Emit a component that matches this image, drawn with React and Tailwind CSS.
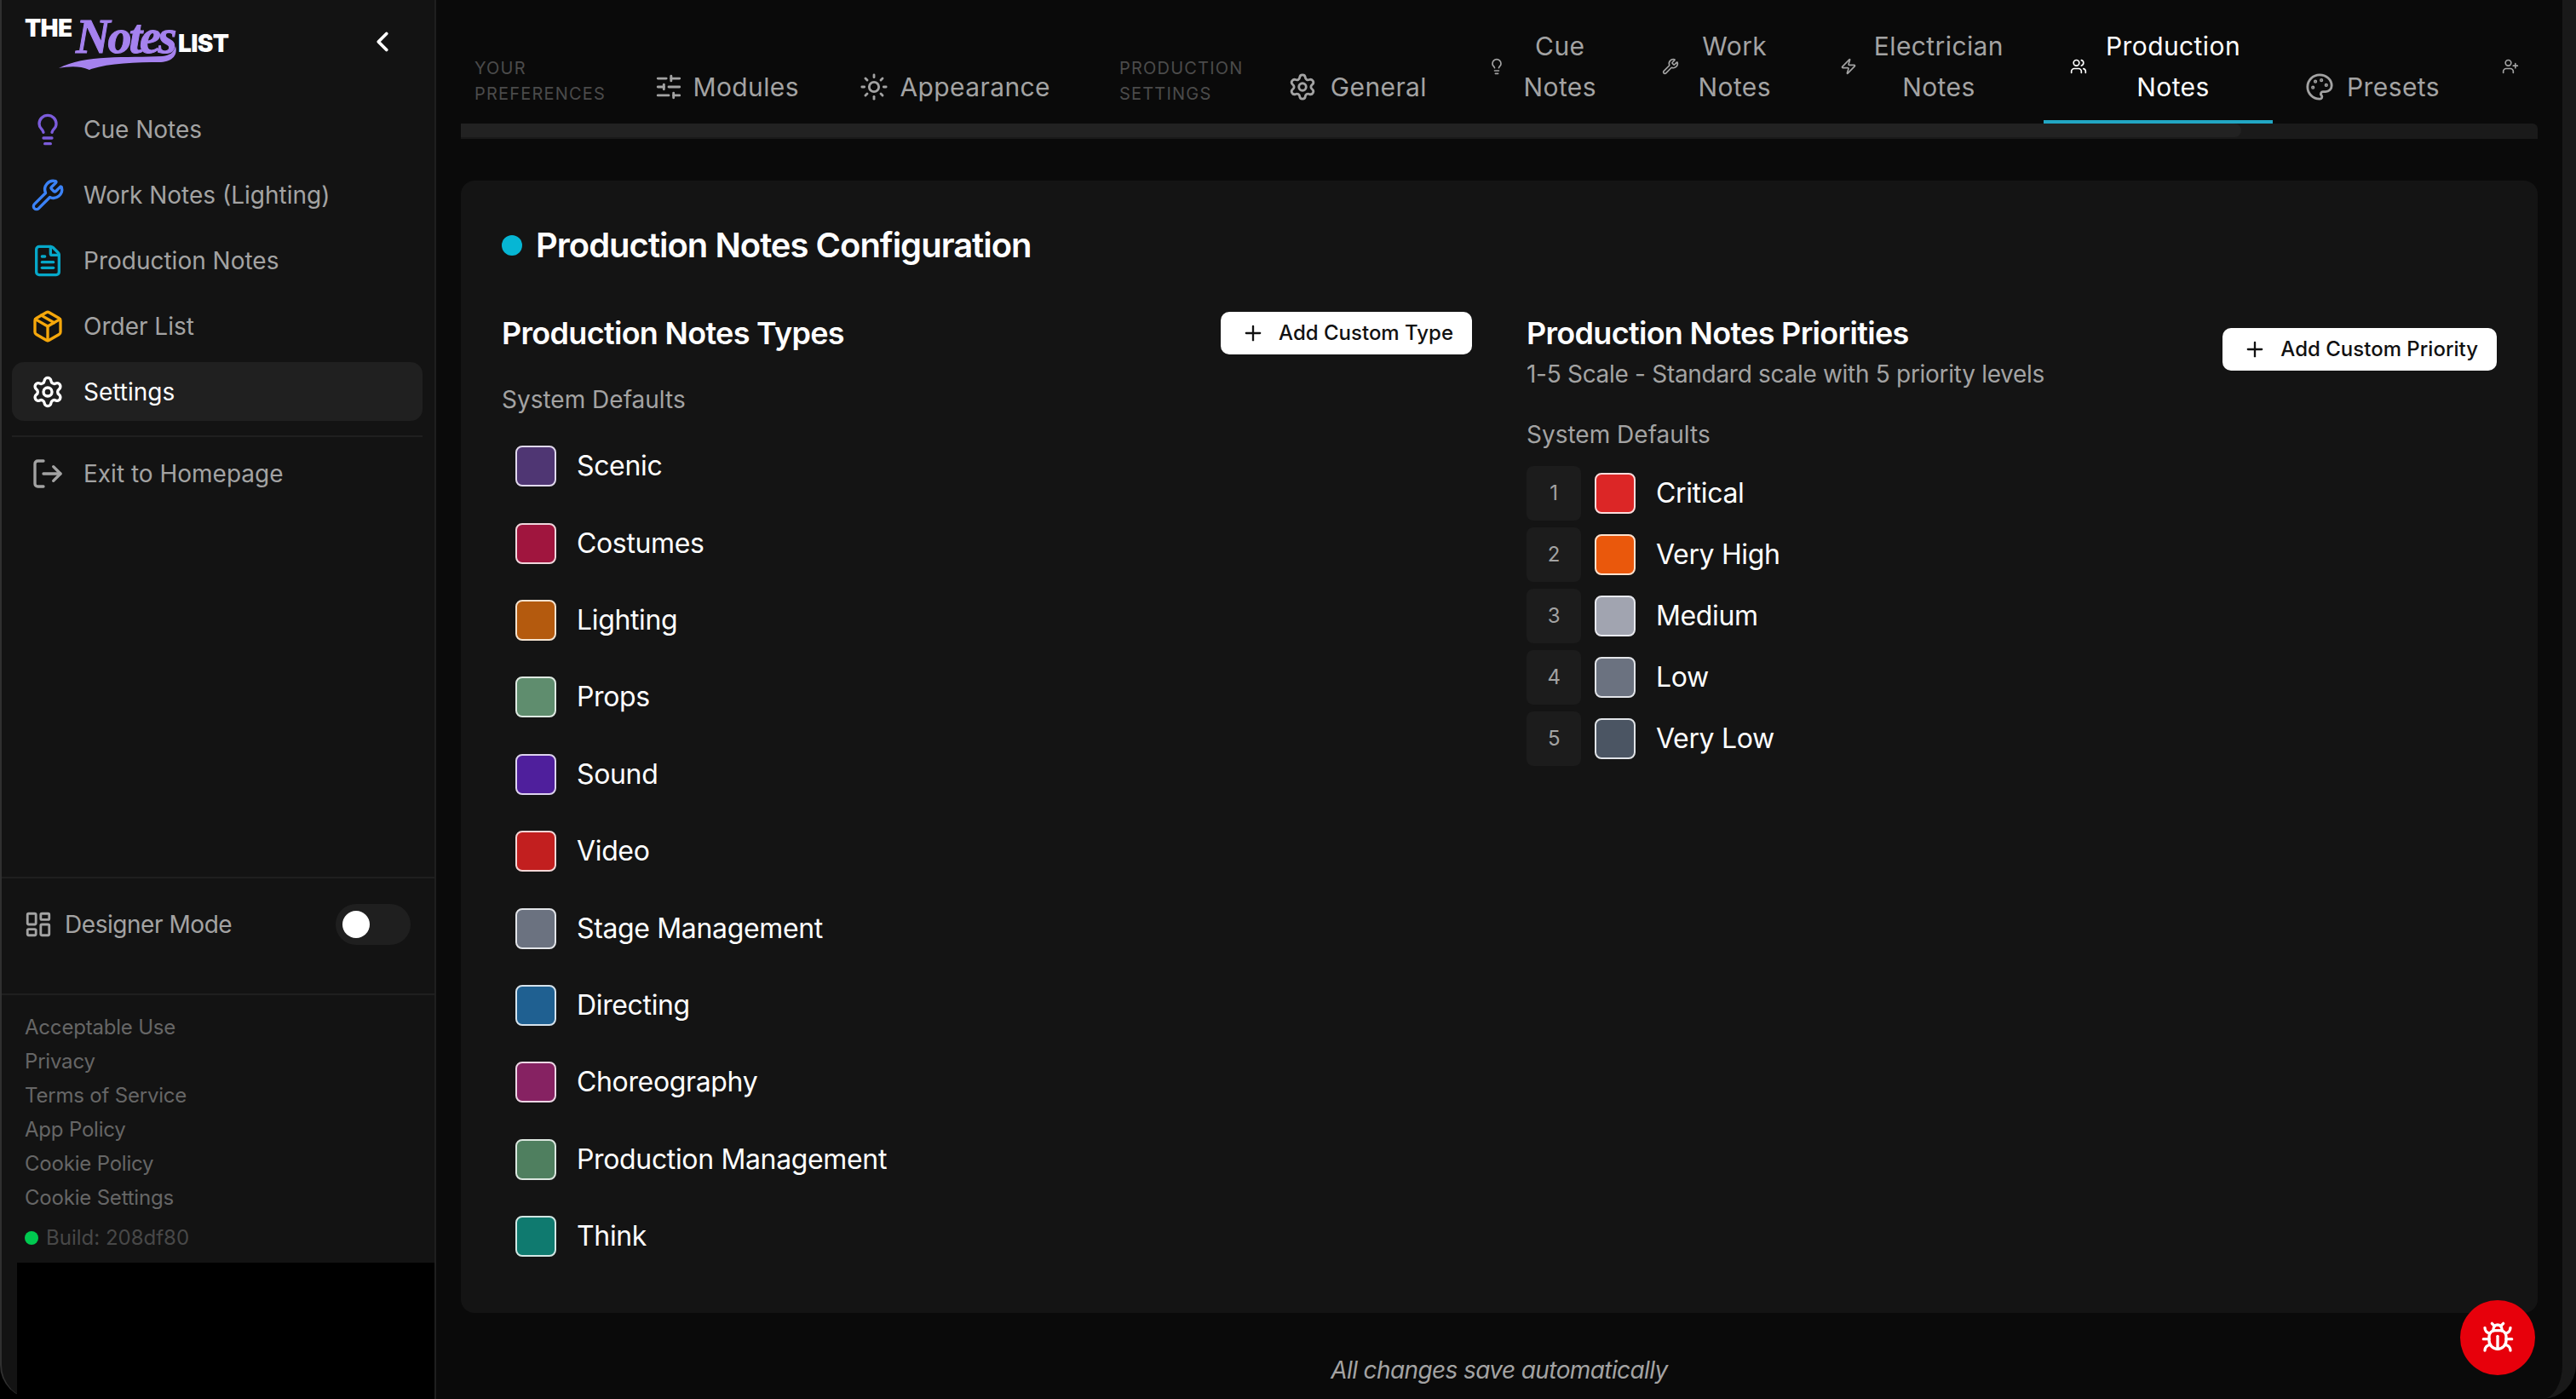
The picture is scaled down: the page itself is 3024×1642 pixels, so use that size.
import { Bug, ChevronLeft, FileText, LayoutDashboard, Lightbulb, LogOut, Package, Palette, Plus, Settings, SlidersHorizontal, Sun, UserPlus, Users, Wrench, Zap } from 'lucide-react';

const navItems = [
    { label: 'Cue Notes', icon: Lightbulb, color: 'text-[#7c5cdb]' },
    { label: 'Work Notes (Lighting)', icon: Wrench, color: 'text-[#3b82f6]' },
    { label: 'Production Notes', icon: FileText, color: 'text-[#06a8c9]' },
    { label: 'Order List', icon: Package, color: 'text-[#f5a70b]' },
];

const legalLinks = ['Acceptable Use', 'Privacy', 'Terms of Service', 'App Policy', 'Cookie Policy', 'Cookie Settings'];

const noteTypes = [
    { label: 'Scenic', color: 'bg-[#4f3673]', border: 'border-[#e0d8ec]' },
    { label: 'Costumes', color: 'bg-[#a0153e]', border: 'border-[#f0d6dc]' },
    { label: 'Lighting', color: 'bg-[#b45a0e]', border: 'border-[#f3e2cf]' },
    { label: 'Props', color: 'bg-[#5f8d6e]', border: 'border-[#dfe9e2]' },
    { label: 'Sound', color: 'bg-[#4f1f9c]', border: 'border-[#ddd3ee]' },
    { label: 'Video', color: 'bg-[#c21f1f]', border: 'border-[#f3d6d6]' },
    { label: 'Stage Management', color: 'bg-[#6b7280]', border: 'border-[#e2e4e8]' },
    { label: 'Directing', color: 'bg-[#1f6091]', border: 'border-[#d5e2ec]' },
    { label: 'Choreography', color: 'bg-[#862262]', border: 'border-[#ecd6e4]' },
    { label: 'Production Management', color: 'bg-[#4f7f5f]', border: 'border-[#dbe6df]' },
    { label: 'Think', color: 'bg-[#0f7a6f]', border: 'border-[#d2e6e3]' },
];

const priorities = [
    { label: 'Critical', color: 'bg-[#dc2626]', border: 'border-[#fbdcdc]' },
    { label: 'Very High', color: 'bg-[#ea580c]', border: 'border-[#fde2cf]' },
    { label: 'Medium', color: 'bg-[#a1a4b0]', border: 'border-[#e8e9ee]' },
    { label: 'Low', color: 'bg-[#6b7280]', border: 'border-[#e2e4e8]' },
    { label: 'Very Low', color: 'bg-[#4b5563]', border: 'border-[#e0e3e7]' },
];

function Logo() {
    return (
        <div className="relative h-[64px] w-[244px] leading-none">
            <span className="absolute left-0 top-[1px] text-[28px] font-black tracking-[-0.6px] text-white">THE</span>
            <span className="absolute left-[60px] top-[-3px] font-['Liberation_Serif',serif] text-[56px] font-bold italic tracking-[-3px] text-[#a582ee] [-webkit-text-stroke:1px_#a582ee]">Notes</span>
            <span className="absolute left-[180px] top-[19px] text-[28px] font-black tracking-[-0.6px] text-white">LIST</span>
            <svg className="absolute left-[40px] top-[32px]" width="140" height="32" viewBox="0 0 140 32">
                <path d="M0 30 C 30 14 80 18 122 16 C 130 15 135 12 137 4 C 140 14 134 22 120 23 C 90 23 60 24 38 31 L 36 32 C 24 27 12 28 0 30 Z" fill="#a582ee" />
            </svg>
        </div>
    );
}

function Sidebar() {
    return (
        <aside className="flex h-full w-[512px] shrink-0 flex-col rounded-bl-[40px] border-r-2 border-l-2 border-r-[#1f1f1f] border-l-[#303030] bg-[#131313]">
            <div className="flex h-[100px] items-start justify-between pl-[27px] pr-[42px] pt-[18px]">
                <Logo />
                <ChevronLeft size={38} strokeWidth={2.4} className="mt-[12px] text-white" />
            </div>
            <nav className="flex flex-col gap-[8px] pl-[12px] pr-[14px] pt-[17px]">
                {navItems.map((item) => (
                    <div key={item.label} className="flex h-[69px] items-center gap-[22px] rounded-[14px] px-[22px] text-[28px] text-[#a3a3a3]">
                        <item.icon size={40} className={item.color} />
                        {item.label}
                    </div>
                ))}
                <div className="flex h-[69px] items-center gap-[22px] rounded-[14px] bg-[#202020] px-[22px] text-[28px] text-white">
                    <Settings size={40} />
                    Settings
                </div>
                <div className="mt-[9px] h-[2px] bg-[#1f1f1f]" />
                <div className="flex h-[69px] items-center gap-[22px] rounded-[14px] px-[22px] text-[28px] text-[#a3a3a3]">
                    <LogOut size={40} />
                    Exit to Homepage
                </div>
            </nav>
            <div className="flex-1" />
            <div className="flex h-[137px] items-start justify-between border-t-2 border-[#1f1f1f] pl-[26px] pr-[28px] pt-[30px]">
                <div className="flex h-[48px] items-center gap-[14px] text-[28px] tracking-[-0.45px] text-[#a3a3a3]">
                    <LayoutDashboard size={34} />
                    Designer Mode
                </div>
                <div className="flex h-[48px] w-[88px] items-center rounded-full bg-[#1f1f1f] pl-[8px]">
                    <div className="h-[32px] w-[32px] rounded-full bg-white" />
                </div>
            </div>
            <div className="flex h-[316px] flex-col border-t-2 border-[#1f1f1f] pl-[27px] pt-[18px]">
                {legalLinks.map((link) => (
                    <div key={link} className="h-[40px] text-[24px] leading-[40px] tracking-[-0.2px] text-[#666666]">{link}</div>
                ))}
                <div className="mt-[7px] flex h-[40px] items-center gap-[9px] text-[24px] text-[#484848]">
                    <div className="h-[16px] w-[16px] rounded-full bg-[#00c950]" />
                    Build: 208df80
                </div>
            </div>
            <div className="ml-[18px] h-[160px] flex-none bg-black" />
        </aside>
    );
}

function GroupLabel({ top, bottom, className }) {
    return (
        <div className={`shrink-0 text-[20px] uppercase leading-[30px] tracking-[1.2px] text-[#4b4b4b] ${className}`}>
            <div>{top}</div>
            <div>{bottom}</div>
        </div>
    );
}

function Tab({ icon: Icon, size, lines, active, className }) {
    return (
        <div className={`flex shrink-0 items-center justify-between border-b-[4px] pb-[15px] text-[30px] leading-[48px] tracking-[0.4px] ${active ? 'border-[#22a7c4] text-white' : 'border-transparent text-[#a3a3a3]'} ${className}`}>
            <Icon size={size} className="shrink-0" />
            <div className="text-center">
                {lines.map((line, i) => (
                    <div key={i}>{line}</div>
                ))}
            </div>
        </div>
    );
}

function TabBar() {
    return (
        <div className="flex h-[145px] items-end overflow-hidden">
            <GroupLabel top="Your" bottom="Preferences" className="mb-[20px] ml-[16px] w-[180px]" />
            <Tab icon={SlidersHorizontal} size={34} lines={['Modules']} className="w-[233px] pl-[31px] pr-[32px]" />
            <Tab icon={Sun} size={34} lines={['Appearance']} className="ml-[9px] w-[286px] pl-[30px] pr-[32px]" />
            <GroupLabel top="Production" bottom="Settings" className="mb-[20px] ml-[49px] w-[169px]" />
            <Tab icon={Settings} size={34} lines={['General']} className="w-[224px] pl-[29px] pr-[32px]" />
            <Tab icon={Lightbulb} size={20} lines={['Cue', 'Notes']} className="ml-[8px] w-[191px] pl-[32px] pr-[32px]" />
            <Tab icon={Wrench} size={20} lines={['Work', 'Notes']} className="ml-[13px] w-[192px] pl-[32px] pr-[32px]" />
            <Tab icon={Zap} size={20} lines={['Electrician', 'Notes']} className="ml-[17px] w-[256px] pl-[32px] pr-[32px]" />
            <Tab icon={Users} size={20} lines={['Production', 'Notes']} active className="ml-[15px] w-[269px] pl-[31px] pr-[38px]" />
            <Tab icon={Palette} size={34} lines={['Presets']} className="ml-[23px] w-[205px] pl-[15px] pr-[32px]" />
            <Tab icon={UserPlus} size={20} lines={['\u00a0', '\u00a0']} className="ml-[9px] w-[74px] pl-[32px]" />
        </div>
    );
}

function Swatch({ color, border }) {
    return <div className={`h-[48px] w-[48px] shrink-0 rounded-[8px] border-2 ${color} ${border}`} />;
}

function AddButton({ children, className }) {
    return (
        <div className={`flex items-center gap-[16px] rounded-[10px] bg-white pl-[24px] pr-[22px] text-[24px] font-medium text-[#111111] ${className}`}>
            <Plus size={28} strokeWidth={2} />
            {children}
        </div>
    );
}

function Card() {
    return (
        <section className="mt-[49px] h-[1329px] rounded-[16px] bg-[#141414] px-[48px] pt-[51px]">
            <div className="flex h-[50px] items-center gap-[16px]">
                <div className="h-[24px] w-[24px] rounded-full bg-[#06b6d4]" />
                <h1 className="text-[40px] font-semibold tracking-[-1px] text-white">Production Notes Configuration</h1>
            </div>
            <div className="mt-[53px] grid grid-cols-2 gap-[64px]">
                <div>
                    <div className="flex h-[50px] items-center justify-between">
                        <h2 className="text-[36px] font-semibold tracking-[-0.7px] text-white">Production Notes Types</h2>
                        <AddButton className="h-[50px]">Add Custom Type</AddButton>
                    </div>
                    <div className="mt-[36px] h-[34px] text-[28px] leading-[34px] text-[#a3a3a3]">System Defaults</div>
                    <div className="mt-[16px] flex flex-col">
                        {noteTypes.map((type) => (
                            <div key={type.label} className="flex h-[90.4px] items-center gap-[24px] pl-[16px] text-[32px] tracking-[-0.35px] text-white">
                                <Swatch color={type.color} border={type.border} />
                                {type.label}
                            </div>
                        ))}
                    </div>
                </div>
                <div>
                    <div className="flex items-start justify-between">
                        <div>
                            <h2 className="h-[50px] text-[36px] font-semibold leading-[50px] tracking-[-0.7px] text-white">Production Notes Priorities</h2>
                            <p className="h-[46px] text-[28px] leading-[46px] tracking-[-0.3px] text-[#a3a3a3]">1-5 Scale - Standard scale with 5 priority levels</p>
                        </div>
                        <AddButton className="mt-[19px] h-[50px]">Add Custom Priority</AddButton>
                    </div>
                    <div className="mt-[31px] h-[34px] text-[28px] leading-[34px] text-[#a3a3a3]">System Defaults</div>
                    <div className="mt-[20px] flex flex-col gap-[8px]">
                        {priorities.map((priority, i) => (
                            <div key={priority.label} className="flex h-[64px] items-center text-[32px] tracking-[-0.35px] text-white">
                                <div className="flex h-[64px] w-[64px] items-center justify-center rounded-[8px] bg-[#1c1c1c] text-[24px] text-[#a3a3a3]">{i + 1}</div>
                                <div className="ml-[16px] mr-[24px]">
                                    <Swatch color={priority.color} border={priority.border} />
                                </div>
                                {priority.label}
                            </div>
                        ))}
                    </div>
                </div>
            </div>
        </section>
    );
}

export default function App() {
    return (
        <div className="relative flex h-[1642px] w-[3024px] overflow-hidden bg-black font-['Inter',sans-serif]">
            <Sidebar />
            <main className="flex min-w-0 flex-1 flex-col rounded-br-[40px] border-r-[16px] border-[#191919] bg-[#0a0a0a] px-[29px]">
                <TabBar />
                <div className="h-[18px] rounded-t-[6px] bg-[#1a1a1a]">
                    <div className="h-[16px] w-[2090px] rounded-r-[8px] bg-[#222222]" />
                </div>
                <Card />
                <p className="mt-[46px] text-center text-[28px] italic tracking-[-0.6px] text-[#a3a3a3]">All changes save automatically</p>
            </main>
            <div className="absolute left-[2888px] top-[1526px] flex h-[88px] w-[88px] items-center justify-center rounded-full bg-[#e7000b] text-white">
                <Bug size={40} />
            </div>
        </div>
    );
}
